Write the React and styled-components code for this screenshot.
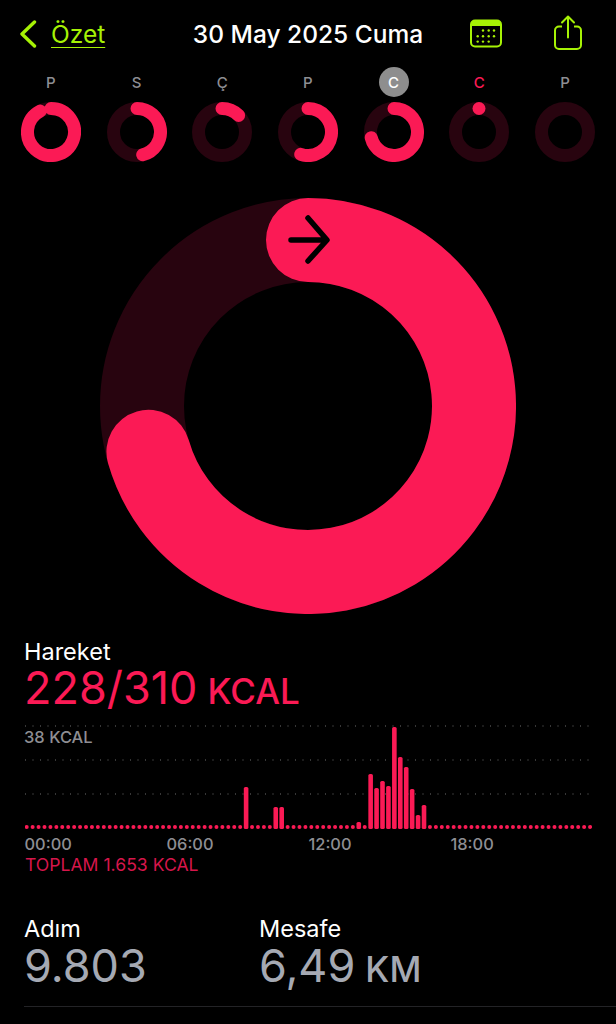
import styled, { createGlobalStyle } from "styled-components";

const GREEN = "#a6f205";
const RED = "#fb1a55";
const DIM = "#28040f";

const GlobalStyle = createGlobalStyle`
  html, body {
    margin: 0;
    background: #000;
  }
`;

const days = [
  { label: "P", angle: 333 },
  { label: "S", angle: 166 },
  { label: "Ç", angle: 45 },
  { label: "P", angle: 198 },
  { label: "C", angle: 256, selected: true },
  { label: "C", angle: 0, today: true },
  { label: "P" },
];

const bars = {
  37: 788, 42: 808, 43: 808, 56: 823, 58: 775, 59: 789, 60: 782, 61: 787,
  62: 728, 63: 758, 64: 768, 65: 790, 66: 816, 67: 806,
};

const times = ["00:00", "06:00", "12:00", "18:00"];

const calendarDots = [
  [13, 11.5], [18.7, 11.5], [24, 11.5],
  [7.7, 17.2], [13, 17.2], [18.7, 17.2], [24, 17.2],
  [7.7, 22.6], [13, 22.6], [18.7, 22.6],
];

const point = (c, r, deg) => {
  const rad = (deg * Math.PI) / 180;
  return `${(c + r * Math.sin(rad)).toFixed(2)} ${(c - r * Math.cos(rad)).toFixed(2)}`;
};

const Ring = ({ size, width, angle }) => {
  const c = size / 2;
  const r = c - width / 2;
  return (
    <svg width={size} height={size} viewBox={`0 0 ${size} ${size}`}>
      <circle cx={c} cy={c} r={r} fill="none" stroke={DIM} strokeWidth={width} />
      {angle !== undefined && (
        <path
          d={`M ${point(c, r, 0)} A ${r} ${r} 0 ${angle > 180 ? 1 : 0} 1 ${point(c, r, angle)}`}
          fill="none"
          stroke={RED}
          strokeWidth={width}
          strokeLinecap="round"
        />
      )}
    </svg>
  );
};

const ChartBars = () => {
  const xs = Array.from({ length: 96 }, (_, i) => 1.7 + i * 5.93);
  return (
    <svg width="567" height="113" viewBox="0 0 567 113">
      {[5, 39, 73].map((y) => (
        <line key={y} x1="0" x2="566" y1={y} y2={y} stroke="#6e6e6e" strokeWidth="1" strokeDasharray="1 6.5" />
      ))}
      {xs.map((x, i) =>
        bars[i] ? (
          <rect key={i} x={x - 2.3} y={bars[i] - 722} width="4.6" height={830 - bars[i]} rx="1.6" fill={RED} />
        ) : (
          <circle key={i} cx={x} cy="106" r="2" fill={RED} />
        )
      )}
    </svg>
  );
};

const App = () => {
  return (
    <Screen>
      <GlobalStyle />
      <Header>
        <BackLink>
          <svg width="18" height="28" viewBox="0 0 18 28">
            <path d="M15.5 2 L3 14 L15.5 26" fill="none" stroke={GREEN} strokeWidth="3.4" strokeLinecap="round" strokeLinejoin="round" />
          </svg>
          <BackText>Özet</BackText>
        </BackLink>
        <Title>30 May 2025 Cuma</Title>
        <Actions>
          <svg width="32" height="30" viewBox="0 0 32 30">
            <rect x="1" y="1.5" width="30" height="26" rx="4" fill="none" stroke={GREEN} strokeWidth="2" />
            <path d="M1 5.5 a4 4 0 0 1 4-4 h22 a4 4 0 0 1 4 4 v1.5 H1 z" fill={GREEN} />
            {calendarDots.map(([x, y]) => (
              <circle key={`${x}-${y}`} cx={x} cy={y} r="1.2" fill={GREEN} />
            ))}
          </svg>
          <svg width="30" height="38" viewBox="0 0 30 38">
            <path d="M9 11.5 H6 a4 4 0 0 0 -4 4 v14.5 a4 4 0 0 0 4 4 h18 a4 4 0 0 0 4 -4 v-14.5 a4 4 0 0 0 -4 -4 h-3" fill="none" stroke={GREEN} strokeWidth="2" />
            <path d="M15 22.5 V1.5 M9 7.5 L15 1.5 L21 7.5" fill="none" stroke={GREEN} strokeWidth="2" strokeLinecap="round" strokeLinejoin="round" />
          </svg>
        </Actions>
      </Header>

      <Week>
        {days.map((day, i) => (
          <Day key={i}>
            <DayLabel $selected={day.selected} $today={day.today}>{day.label}</DayLabel>
            <Ring size={60} width={13} angle={day.angle} />
          </Day>
        ))}
      </Week>

      <MainRing>
        <svg width="416" height="416" viewBox="0 0 416 416">
          <circle cx="208" cy="208" r="166" fill="none" stroke={DIM} strokeWidth="84" />
          <path d={`M 208 42 A 166 166 0 1 1 ${point(208, 166, 254)}`} fill="none" stroke={RED} strokeWidth="84" strokeLinecap="round" />
          <path d="M191 42 H226 M208 20 L227 42 L208 63" fill="none" stroke="#000" strokeWidth="5.5" strokeLinecap="round" strokeLinejoin="round" />
        </svg>
      </MainRing>

      <Summary>
        <StatLabel>Hareket</StatLabel>
        <MoveValue>228/310<Unit>KCAL</Unit></MoveValue>
        <Chart>
          <ChartBars />
          <ChartMax>38 KCAL</ChartMax>
        </Chart>
        <TimeRow>
          {times.map((time) => (
            <Time key={time}>{time}</Time>
          ))}
        </TimeRow>
        <Total>TOPLAM 1.653 KCAL</Total>
        <Stats>
          <Stat>
            <StatLabel>Adım</StatLabel>
            <StatValue>9.803</StatValue>
          </Stat>
          <Stat>
            <StatLabel>Mesafe</StatLabel>
            <StatValue>6,49<Unit>KM</Unit></StatValue>
          </Stat>
        </Stats>
      </Summary>
      <Divider />
    </Screen>
  );
};

const Screen = styled.div`
  width: 616px;
  height: 1024px;
  overflow: hidden;
  background: #000;
  color: #fff;
  font-family: Inter, "Liberation Sans", sans-serif;
`;

const Header = styled.header`
  display: grid;
  grid-template-columns: 1fr auto 1fr;
  align-items: center;
  height: 67px;
`;

const BackLink = styled.div`
  display: flex;
  align-items: center;
  gap: 14px;
  padding-left: 19px;
`;

const BackText = styled.span`
  color: ${GREEN};
  font-size: 24.5px;
  text-decoration: underline;
  text-underline-offset: 4px;
  text-decoration-thickness: 1px;
`;

const Title = styled.h1`
  margin: 0;
  font-size: 24.5px;
  font-weight: 500;
`;

const Actions = styled.div`
  display: flex;
  align-items: center;
  justify-content: flex-end;
  gap: 51px;
  padding-right: 33px;
`;

const Week = styled.div`
  display: grid;
  grid-template-columns: repeat(7, 85.7px);
  padding-left: 8px;
`;

const Day = styled.div`
  display: flex;
  flex-direction: column;
  align-items: center;
  gap: 5px;
`;

const DayLabel = styled.span`
  display: flex;
  align-items: center;
  justify-content: center;
  width: 30px;
  height: 30px;
  border-radius: 50%;
  font-size: 15px;
  font-weight: 500;
  color: ${(p) => (p.$selected ? "#fff" : p.$today ? RED : "#8e8e93")};
  background: ${(p) => (p.$selected ? "#8e8e8e" : "transparent")};
`;

const MainRing = styled.div`
  display: flex;
  justify-content: center;
  margin-top: 36px;
`;

const Summary = styled.section`
  margin-top: 24px;
  padding-left: 25px;
`;

const StatLabel = styled.div`
  margin-left: -1px;
  font-size: 23.5px;
  line-height: 28px;
`;

const MoveValue = styled.div`
  margin-left: -1px;
  color: ${RED};
  font-size: 45px;
  line-height: 44px;
`;

const Unit = styled.span`
  margin-left: 10px;
  font-size: 35px;
  font-weight: 500;
`;

const Chart = styled.div`
  position: relative;
  height: 113px;
  margin-top: 8px;
`;

const ChartMax = styled.span`
  position: absolute;
  left: -1px;
  top: 6px;
  color: #8e8e93;
  font-size: 16.5px;
  font-weight: 500;
`;

const TimeRow = styled.div`
  display: grid;
  grid-template-columns: repeat(4, 142px);
  padding-top: 1px;
`;

const Time = styled.span`
  margin-left: -0.5px;
  color: #8e8e93;
  font-size: 16.4px;
  line-height: 18px;
  font-weight: 500;
`;

const Total = styled.div`
  margin-top: 2px;
  color: #d6164b;
  font-size: 17.6px;
  line-height: 20px;
`;

const Stats = styled.div`
  display: grid;
  grid-template-columns: 235px 1fr;
  margin-top: 40px;
`;

const Stat = styled.div`
  display: flex;
  flex-direction: column;
`;

const StatValue = styled.div`
  margin-left: -1px;
  color: #a5a9b3;
  font-size: 45px;
  line-height: 45px;
`;

const Divider = styled.hr`
  margin: 14px 0 0 24px;
  border: 0;
  height: 1px;
  background: #232326;
`;

export default App;
